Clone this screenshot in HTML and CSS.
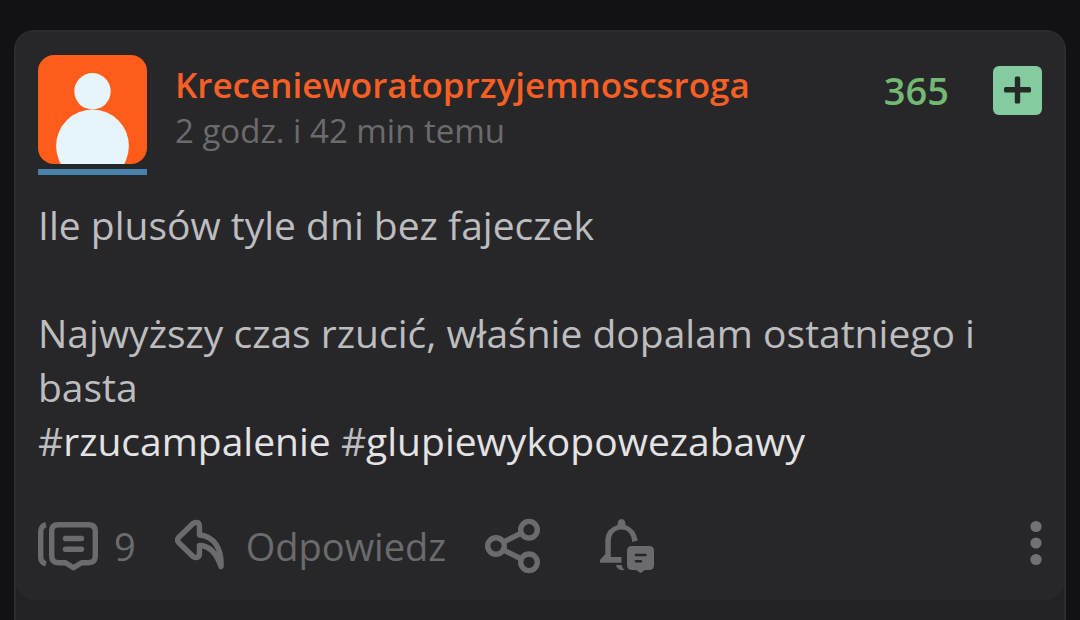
FILE: index.html
```html
<!DOCTYPE html>
<html lang="pl">
<head>
<meta charset="utf-8">
<meta name="viewport" content="width=device-width, initial-scale=1">
<title>Mikroblog</title>
<link rel="stylesheet" href="styles.css">
</head>
<body>
<main class="thread">
  <article class="entry">
    <header class="entry-header">
      <a class="avatar" href="#profile" aria-label="Profil autora">
        <svg class="avatar-image" viewBox="0 0 109 109" aria-hidden="true">
          <rect width="109" height="109" fill="#ff5c1a"/>
          <circle cx="54.5" cy="36.3" r="18.2" fill="#e6f4fc"/>
          <circle cx="54.5" cy="91" r="36.4" fill="#e6f4fc"/>
        </svg>
        <span class="avatar-bar"></span>
      </a>
      <div class="author">
        <a class="author-name" href="#profile">Krecenieworatoprzyjemnoscsroga</a>
        <time class="author-time">2 godz. i 42 min temu</time>
      </div>
      <div class="rating">
        <span class="rating-count">365</span>
        <button class="plus" type="button" aria-label="Plusuj">
          <svg class="plus-icon" viewBox="0 0 27 27" aria-hidden="true">
            <rect x="10.800" y="-0.500" width="5.400" height="27" rx="1.500" fill="#232a27"/>
            <rect x="0" y="10" width="27" height="5.400" rx="1.500" fill="#232a27"/>
          </svg>
        </button>
      </div>
    </header>
    <div class="content">
      <p class="paragraph">Ile plusów tyle dni bez fajeczek</p>
      <p class="paragraph">Najwyższy czas rzucić, właśnie dopalam ostatniego i basta<br>#<a class="tag" href="#rzucampalenie">rzucampalenie</a> #<a class="tag" href="#glupiewykopowezabawy">glupiewykopowezabawy</a></p>
    </div>
    <footer class="actions">
      <button class="action" type="button" aria-label="Komentarze: 9">
        <svg class="icon-comments" viewBox="0 -1 60 56" fill="none" stroke="#6b6b6d" stroke-width="5.4" aria-hidden="true">
          <path d="M8 5.700Q2.700 7 2.700 13V38Q2.700 43.500 8 45"/>
          <path d="M20 5.700H50.500Q57.300 5.700 57.300 12V37Q57.300 43.700 50.500 43.700H43.500L35.500 48.700L27.500 43.700H20.500Q13.700 43.700 13.700 37V12Q13.700 5.700 20 5.700Z" stroke-linejoin="round"/>
          <path d="M27.500 19.500H43.500M27.500 30.300H43.500" stroke-linecap="round"/>
        </svg>
        <span>9</span>
      </button>
      <button class="action" type="button">
        <svg class="icon-reply" viewBox="0 -1 50 56" fill="none" stroke="#6b6b6d" stroke-width="5.400" stroke-linejoin="round" aria-hidden="true">
          <path d="M24.500 8Q24.500 1 18 4.500L3.600 18.500Q1.500 21 3.600 23.500L18 37.500Q24.500 40.500 24.500 34V26.500C33 26.500 41 33 46 47.500C47 30 39 17 24.500 16Z"/>
        </svg>
        <span>Odpowiedz</span>
      </button>
      <button class="action" type="button" aria-label="Udostępnij">
        <svg class="icon-share" viewBox="0 0 56 56" fill="none" stroke="#6b6b6d" stroke-width="5.400" aria-hidden="true">
          <circle cx="11" cy="28" r="8.300"/>
          <circle cx="44" cy="11.700" r="8.300"/>
          <circle cx="44" cy="44.300" r="8.300"/>
          <path d="M18.500 24L36.500 15M18.500 32L36.500 41"/>
        </svg>
      </button>
      <button class="action" type="button" aria-label="Obserwuj">
        <svg class="icon-bell" viewBox="0 0 56 56" aria-hidden="true">
          <path d="M0 44.700V42L5.300 36V22Q6 10.500 17.500 7Q17.500 1 21.500 1Q25.500 1 25.500 7Q35.500 10.500 37.700 22.500L32.300 24Q31 11.500 21.500 11.500Q10.800 12 10.800 24V39H21.500V44.700Z" fill="#6b6b6d"/>
          <path d="M16 47H21.500Q22 50 24.500 52Q17 53 16 47Z" fill="#6b6b6d"/>
          <path d="M32 28H49Q54 28 54 33V47Q54 52 49 52H45L40.500 55L36 52H32Q27 52 27 47V33Q27 28 32 28Z" fill="#6b6b6d"/>
          <path d="M36 37H45.500M36 43.200H41" stroke="#272729" stroke-width="2.500" stroke-linecap="round"/>
        </svg>
      </button>
      <button class="action action-more" type="button" aria-label="Więcej">
        <svg class="icon-more" viewBox="0 0 12 56" fill="#727274" aria-hidden="true">
          <circle cx="6" cy="8.500" r="5.600"/>
          <circle cx="6" cy="25" r="5.600"/>
          <circle cx="6" cy="41.500" r="5.600"/>
        </svg>
      </button>
    </footer>
  </article>
</main>
</body>
</html>
```
FILE: styles.css
```css
* {
  box-sizing: border-box;
}

body {
  margin: 0;
  padding: 30px 14px 0;
  background: #121214;
  color: #bdbdbf;
  font-family: "Open Sans", "Noto Sans", sans-serif;
}

a {
  color: inherit;
  text-decoration: none;
}

button {
  margin: 0;
  padding: 0;
  border: 0;
  background: none;
  color: inherit;
  font: inherit;
  cursor: pointer;
}

svg {
  display: block;
}

.thread {
  min-height: calc(100vh - 30px);
  border: 2px solid #2c2c2e;
  border-bottom: 0;
  border-radius: 20px 20px 0 0;
  background: #222224;
}

.entry {
  padding: 23px 22px 26px;
  border-radius: 18px;
  background: #272729;
}

.entry-header {
  display: flex;
  align-items: flex-start;
}

.avatar {
  flex: none;
  width: 109px;
}

.avatar-image {
  width: 109px;
  height: 109px;
  border-radius: 16px;
}

.avatar-bar {
  display: block;
  height: 6px;
  margin-top: 5px;
  background: #4682ac;
}

.author {
  display: flex;
  flex: 1;
  flex-direction: column;
  min-width: 0;
  margin-left: 28px;
  padding-top: 7px;
  line-height: 46px;
}

.author-name {
  color: #f85f24;
  font-size: 35px;
  font-weight: 600;
}

.author-time {
  color: #6b6b6d;
  font-size: 33px;
}

.rating {
  display: flex;
  gap: 44px;
  align-items: center;
  padding-top: 11px;
}

.rating-count {
  color: #73b873;
  font-size: 38px;
  font-weight: 600;
  line-height: 49px;
}

.plus {
  display: grid;
  place-items: center;
  width: 49px;
  height: 49px;
  border-radius: 6px;
  background: #84cb9f;
}

.plus-icon {
  width: 27px;
  height: 27px;
  overflow: visible;
}

.content {
  display: grid;
  gap: 54px;
  margin-top: 23px;
  font-size: 39px;
  line-height: 54px;
}

.paragraph {
  margin: 0;
}

.tag {
  color: #e3e3e5;
}

.actions {
  display: flex;
  align-items: center;
  margin-top: 50px;
  color: #6b6b6d;
  font-size: 38px;
  line-height: 56px;
}

.action {
  display: flex;
  align-items: center;
  margin-right: 39px;
}

.action-more {
  margin-right: 0;
  margin-left: auto;
}

.icon-comments {
  width: 60px;
  height: 56px;
  margin-right: 16px;
}

.icon-reply {
  width: 50px;
  height: 56px;
  margin-right: 21px;
}

.icon-share,
.icon-bell {
  width: 56px;
  height: 56px;
}

.icon-share {
  margin-right: 20px;
}

.icon-more {
  width: 12px;
  height: 56px;
}
```
